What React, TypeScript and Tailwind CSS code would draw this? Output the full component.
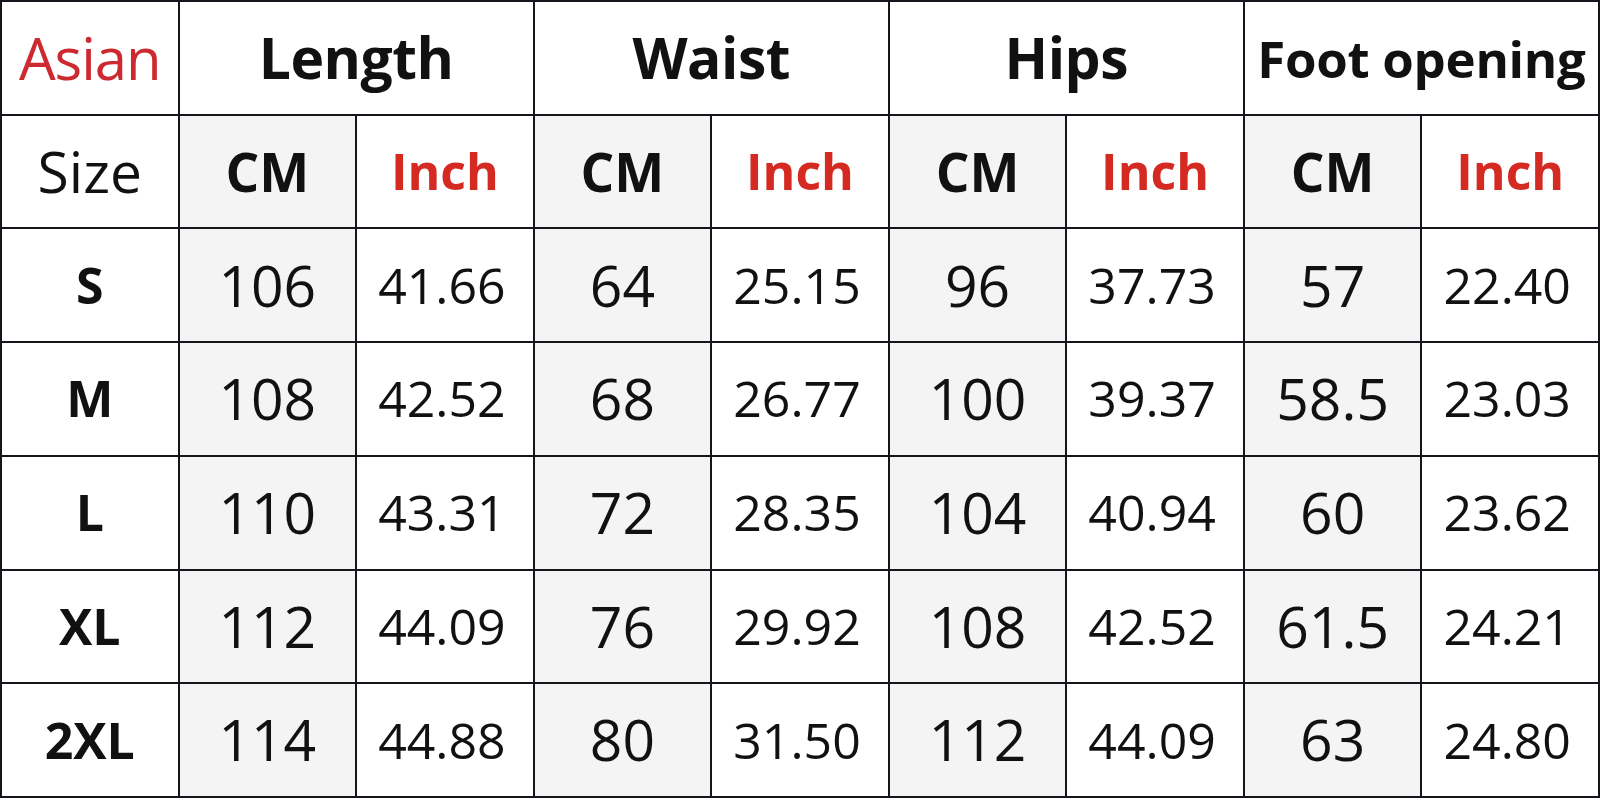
import React from "react";

const rows = [
  ["S", "106", "41.66", "64", "25.15", "96", "37.73", "57", "22.40"],
  ["M", "108", "42.52", "68", "26.77", "100", "39.37", "58.5", "23.03"],
  ["L", "110", "43.31", "72", "28.35", "104", "40.94", "60", "23.62"],
  ["XL", "112", "44.09", "76", "29.92", "108", "42.52", "61.5", "24.21"],
  ["2XL", "114", "44.88", "80", "31.50", "112", "44.09", "63", "24.80"],
];

const cell = "flex items-center justify-center";

export default function App() {
  return (
    <div
      className="w-[1600px] h-[798px] bg-[#15151c] p-[2px] grid grid-cols-9 grid-rows-7 gap-[2px] overflow-hidden"
      style={{ fontFamily: '"Open Sans", "Noto Sans", sans-serif' }}
    >
      <div className={`${cell} bg-white text-[58px] font-normal text-[#cc2a30] tracking-[-1px]`}>Asian</div>
      {["Length", "Waist", "Hips"].map((h) => (
        <div key={h} className={`${cell} col-span-2 bg-white text-[57px] font-bold text-[#111] tracking-[-0.5px]`}>
          {h}
        </div>
      ))}
      <div className={`${cell} col-span-2 bg-white text-[51px] font-bold text-[#111] tracking-[-0.3px]`}>Foot opening</div>

      <div className={`${cell} bg-white text-[57px] text-[#111]`}>Size</div>
      {[0, 1, 2, 3].map((i) => (
        <React.Fragment key={i}>
          <div className={`${cell} bg-[#f4f4f4] text-[53px] font-bold text-[#111]`}>CM</div>
          <div className={`${cell} bg-white text-[50px] font-bold text-[#d52a22]`}>Inch</div>
        </React.Fragment>
      ))}

      {rows.map((r) => (
        <React.Fragment key={r[0]}>
          <div className={`${cell} bg-white text-[50px] font-bold text-[#111]`}>{r[0]}</div>
          {r.slice(1).map((v, j) => (
            <div
              key={j}
              className={
                j % 2 === 0
                  ? `${cell} bg-[#f4f4f4] text-[57px] text-[#111]`
                  : `${cell} bg-white text-[50px] text-[#111] pr-[6px]`
              }
            >
              {v}
            </div>
          ))}
        </React.Fragment>
      ))}
    </div>
  );
}
